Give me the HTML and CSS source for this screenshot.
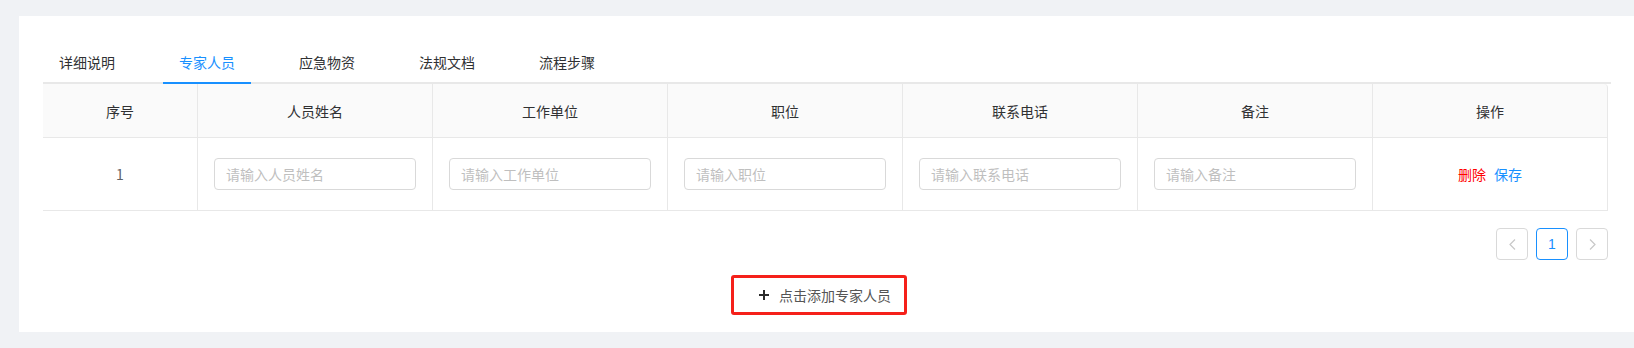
FILE: index.html
```html
<!DOCTYPE html>
<html lang="zh-CN">
<head>
<meta charset="utf-8">
<title>专家人员</title>
<link rel="stylesheet" href="styles.css">
</head>
<body>
<div class="page">
  <div class="card">
    <div class="tabs">
      <div class="tab">详细说明</div>
      <div class="tab active">专家人员</div>
      <div class="tab">应急物资</div>
      <div class="tab">法规文档</div>
      <div class="tab">流程步骤</div>
    </div>
    <table class="grid">
      <colgroup>
        <col class="c-first">
        <col class="c-col"><col class="c-col"><col class="c-col"><col class="c-col"><col class="c-col"><col class="c-col">
      </colgroup>
      <thead>
        <tr>
          <th>序号</th>
          <th>人员姓名</th>
          <th>工作单位</th>
          <th>职位</th>
          <th>联系电话</th>
          <th>备注</th>
          <th class="last">操作</th>
        </tr>
      </thead>
      <tbody>
        <tr>
          <td class="num">1</td>
          <td><input class="field" placeholder="请输入人员姓名"></td>
          <td><input class="field" placeholder="请输入工作单位"></td>
          <td><input class="field" placeholder="请输入职位"></td>
          <td><input class="field" placeholder="请输入联系电话"></td>
          <td><input class="field" placeholder="请输入备注"></td>
          <td class="ops"><span class="del">删除</span><span class="save">保存</span></td>
        </tr>
      </tbody>
    </table>
    <div class="pager">
      <span class="pg disabled">
        <svg width="7" height="11" viewBox="0 0 7 11"><path d="M6 0.5 L1 5.5 L6 10.5" fill="none" stroke="#c8c8c8" stroke-width="1.2"/></svg>
      </span>
      <span class="pg current">1</span>
      <span class="pg disabled">
        <svg width="7" height="11" viewBox="0 0 7 11"><path d="M1 0.5 L6 5.5 L1 10.5" fill="none" stroke="#c8c8c8" stroke-width="1.2"/></svg>
      </span>
    </div>
    <div class="add-row">
      <div class="add-btn">
        <svg class="plus" width="10" height="10" viewBox="0 0 10 10"><path d="M5 0 V10 M0 5 H10" stroke="#2b2b2b" stroke-width="2"/></svg>
        <span>点击添加专家人员</span>
      </div>
    </div>
  </div>
</div>
</body>
</html>
```
FILE: styles.css
```css
html, body {
  margin: 0;
  padding: 0;
  background: #f0f2f5;
  font-family: "Noto Sans CJK SC", "Noto Sans", sans-serif;
  font-size: 14px;
  color: #333;
}
.page {
  padding: 16px 0 16px 19px;
}
.card {
  background: #fff;
  height: 316px;
  box-sizing: border-box;
  padding: 26px 26px 0 24px;
}
.tabs {
  display: flex;
  border-bottom: 2px solid #e8e8e8;
  height: 40px;
  margin-right: -3px;
}
.tab {
  padding: 0 16px;
  margin-right: 32px;
  line-height: 40px;
  height: 40px;
  color: #303133;
  position: relative;
}
.tab.active {
  color: #1890ff;
}
.tab.active::after {
  content: "";
  position: absolute;
  left: 0;
  right: 0;
  bottom: -2px;
  height: 2px;
  background: #1890ff;
}
.grid {
  width: 1565px;
  border-collapse: separate;
  border-spacing: 0;
  table-layout: fixed;
}
.c-first { width: 155px; }
.c-col { width: 235px; }
.grid th {
  background: #fafafa;
  height: 53px;
  font-weight: normal;
  color: #303133;
  border-right: 1px solid #e8e8e8;
  border-bottom: 1px solid #e8e8e8;
  padding: 0;
}
.grid th.last {
  border-top-right-radius: 4px;
}
.grid td {
  height: 72px;
  border-right: 1px solid #e8e8e8;
  border-bottom: 1px solid #e8e8e8;
  padding: 0 16px;
  text-align: center;
}
.grid td.num {
  color: #606266;
}
.field {
  display: block;
  width: 100%;
  box-sizing: border-box;
  height: 32px;
  border: 1px solid #d9d9d9;
  border-radius: 4px;
  padding: 0 11px;
  font-family: inherit;
  font-size: 14px;
  color: #333;
  outline: none;
  background: #fff;
}
.field::placeholder {
  color: #bfbfbf;
}
.ops .del {
  color: #ff0000;
  margin-right: 8px;
}
.ops .save {
  color: #1890ff;
}
.pager {
  display: flex;
  justify-content: flex-end;
  gap: 8px;
  margin-top: 17px;
}
.pg {
  width: 32px;
  height: 32px;
  box-sizing: border-box;
  border: 1px solid #d9d9d9;
  border-radius: 4px;
  display: flex;
  align-items: center;
  justify-content: center;
  color: #606266;
  font-family: "Liberation Sans", Arial, sans-serif;
  font-size: 14px;
}
.pg.current {
  border-color: #1890ff;
  color: #1890ff;
}
.add-row {
  display: flex;
  justify-content: center;
  margin-top: 15px;
}
.add-btn {
  width: 176px;
  height: 40px;
  box-sizing: border-box;
  border: 3px solid #f5201a;
  border-radius: 3px;
  display: flex;
  align-items: center;
  padding-left: 25px;
  margin-right: 13px;
  color: #555;
}
.plus {
  margin-right: 10px;
  flex: none;
}
```
